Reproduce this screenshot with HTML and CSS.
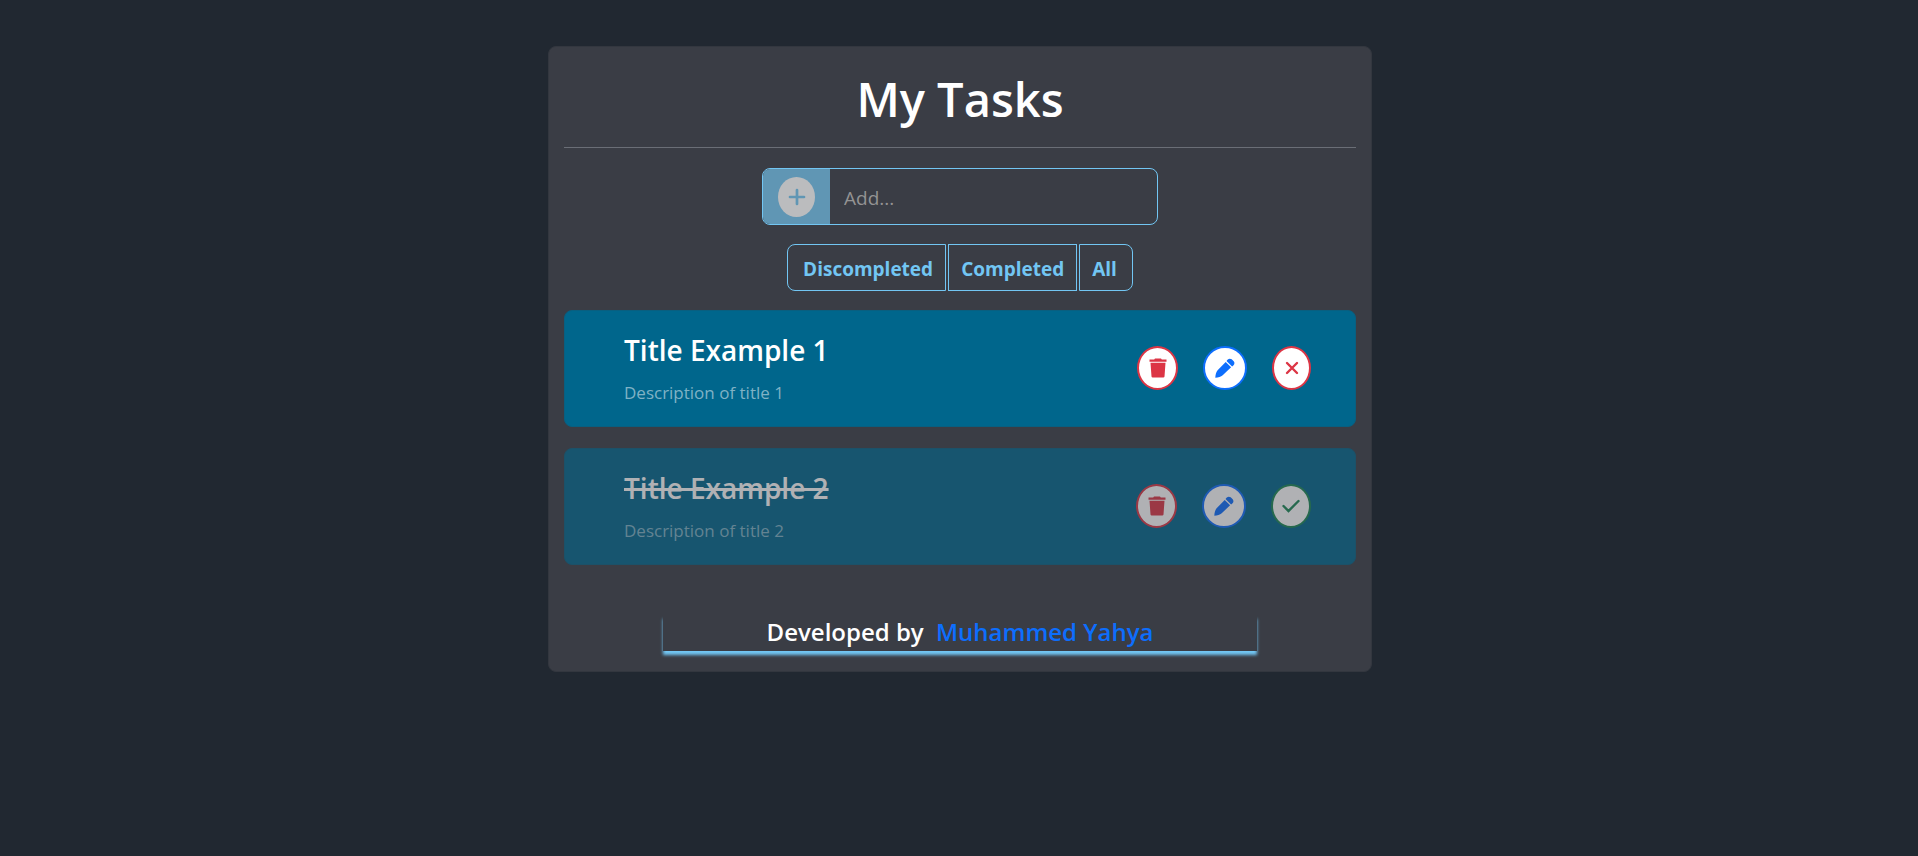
FILE: index.html
```html
<!DOCTYPE html>
<html lang="en">
<head>
<meta charset="utf-8">
<meta name="viewport" content="width=device-width, initial-scale=1">
<title>My Tasks</title>
<link rel="stylesheet" href="styles.css">
</head>
<body>
<svg class="sprite" aria-hidden="true">
  <symbol id="trash" viewBox="0 0 18 20"><path fill="currentColor" d="M5.200 1.500L6 .5h6l.8 1H17.500v2.200H.5V1.500zM1.500 4.700h15l-1 13.800a1.200 1.200 0 0 1-1.200 1H3.700a1.200 1.200 0 0 1-1.200-1z"/></symbol>
  <symbol id="pencil" viewBox="0 0 20 20"><path fill="currentColor" d="M12.500 1.800c1.300-1.400 2.900-1.500 4.200-.5l2 2c1.100 1.300 1 2.900-.4 4.200l-1.200 1-5.600-5.600zM10.700 3.900l5.400 5.400-8.400 8c-1.800 1.500-4.300 2.200-7.400 2.500.2-3 .8-5.700 2.300-7.500z"/></symbol>
  <symbol id="cross" viewBox="0 0 14 14"><path d="M2 2l10 10M12 2L2 12" fill="none" stroke="currentColor" stroke-width="2.400" stroke-linecap="round"/></symbol>
  <symbol id="check" viewBox="0 0 18 14"><path d="M1.500 7l5 5L16.500 2" fill="none" stroke="currentColor" stroke-width="2.400" stroke-linecap="round"/></symbol>
  <symbol id="plus" viewBox="0 0 18 18"><path d="M9 2v14M2 9h14" fill="none" stroke="currentColor" stroke-width="2.700" stroke-linecap="round"/></symbol>
</svg>
<main class="card">
  <h1 class="title">My Tasks</h1>
  <hr class="divider">
  <form class="add">
    <button class="add-button" type="button" aria-label="Add task"><span class="add-circle"><svg class="icon-plus"><use href="#plus"/></svg></span></button>
    <input class="add-input" type="text" placeholder="Add..." aria-label="New task">
  </form>
  <div class="filters">
    <button class="filter" type="button">Discompleted</button>
    <button class="filter" type="button">Completed</button>
    <button class="filter" type="button">All</button>
  </div>
  <ul class="tasks">
    <li class="task">
      <div class="task-text">
        <h2 class="task-title">Title Example 1</h2>
        <p class="task-desc">Description of title 1</p>
      </div>
      <div class="actions">
        <button class="action remove" type="button" aria-label="Delete"><svg class="icon-trash"><use href="#trash"/></svg></button>
        <button class="action edit" type="button" aria-label="Edit"><svg class="icon-pencil"><use href="#pencil"/></svg></button>
        <button class="action pending" type="button" aria-label="Not completed"><svg class="icon-cross"><use href="#cross"/></svg></button>
      </div>
    </li>
    <li class="task done">
      <div class="task-text">
        <h2 class="task-title">Title Example 2</h2>
        <p class="task-desc">Description of title 2</p>
      </div>
      <div class="actions">
        <button class="action remove" type="button" aria-label="Delete"><svg class="icon-trash"><use href="#trash"/></svg></button>
        <button class="action edit" type="button" aria-label="Edit"><svg class="icon-pencil"><use href="#pencil"/></svg></button>
        <button class="action complete" type="button" aria-label="Completed"><svg class="icon-check"><use href="#check"/></svg></button>
      </div>
    </li>
  </ul>
  <footer class="footer">Developed by <a class="author" href="#">Muhammed Yahya</a></footer>
</main>
</body>
</html>
```
FILE: styles.css
```css
* {
  box-sizing: border-box;
}

body {
  margin: 0;
  padding: 46px 12px 46px 14px;
  background: #212831;
  color: #fff;
  font-family: "Segoe UI", "Open Sans", "Noto Sans", sans-serif;
}

button {
  font: inherit;
  cursor: pointer;
}

.sprite {
  position: absolute;
  width: 0;
  height: 0;
}

.card {
  display: flex;
  flex-direction: column;
  align-items: center;
  max-width: 824px;
  margin: 0 auto;
  padding: 16px 15px 20px;
  background: #3a3d45;
  border: 1px solid #33373f;
  border-radius: 8px;
}

.title {
  margin: 6px 0 18px;
  font-size: 47px;
  font-weight: 600;
  line-height: 60px;
}

.divider {
  width: 100%;
  height: 1px;
  margin: 0 0 20px;
  border: 0;
  background: #6a6e76;
}

.add {
  display: flex;
  width: 50%;
  height: 57px;
  margin-bottom: 19px;
  border: 1px solid #72c6f3;
  border-radius: 8px;
  overflow: hidden;
}

.add-button {
  display: flex;
  align-items: center;
  justify-content: center;
  flex: 0 0 67px;
  padding: 0;
  border: 0;
  background: #6096b4;
}

.add-circle {
  display: flex;
  align-items: center;
  justify-content: center;
  width: 37px;
  height: 40px;
  border-radius: 50%;
  background: #bbbcbe;
  color: #6096b4;
}

.icon-plus {
  width: 18px;
  height: 18px;
}

.add-input {
  flex: 1;
  min-width: 0;
  padding: 2px 14px 0;
  border: 0;
  outline: 0;
  background: transparent;
  color: #fff;
  font: inherit;
  font-size: 19px;
}

.add-input::placeholder {
  color: #939393;
  opacity: 1;
}

.filters {
  display: flex;
  gap: 2px;
  margin-bottom: 19px;
}

.filter {
  height: 47px;
  padding: 2px 12px 0;
  border: 1px solid #72c6f3;
  background: transparent;
  color: #72c6f3;
  font-size: 19px;
  font-weight: 700;
}

.filter:first-child {
  padding-left: 15px;
  border-radius: 8px 0 0 8px;
}

.filter:last-child {
  padding-right: 15px;
  border-radius: 0 8px 8px 0;
}

.tasks {
  display: grid;
  gap: 21px;
  width: 100%;
  margin: 0 0 50px;
  padding: 0;
  list-style: none;
}

.task {
  display: flex;
  align-items: center;
  justify-content: space-between;
  padding: 18px 44px 19px 59px;
  background: #00668c;
  border: 1px solid #095f80;
  border-radius: 8px;
}

.done {
  opacity: 0.6;
}

.task-title {
  margin: 0 0 8px;
  font-size: 28px;
  font-weight: 600;
  line-height: 42px;
}

.done .task-title {
  text-decoration: line-through;
  text-decoration-thickness: 3px;
}

.task-desc {
  margin: 0;
  color: #7fb2c5;
  font-size: 17px;
  line-height: 28px;
}

.actions {
  display: flex;
  gap: 25px;
}

.action {
  display: flex;
  align-items: center;
  justify-content: center;
  width: 41px;
  height: 44px;
  padding: 0;
  border: 2px solid currentColor;
  border-radius: 50%;
  background: #fff;
}

.remove,
.pending {
  color: #dc3545;
}

.pending {
  width: 39px;
}

.edit {
  width: 44px;
  color: #0d6efd;
}

.complete {
  width: 40px;
  color: #198754;
}

.icon-trash {
  width: 18px;
  height: 20px;
}

.icon-pencil {
  width: 20px;
  height: 20px;
}

.icon-cross {
  width: 14px;
  height: 14px;
}

.icon-check {
  width: 18px;
  height: 14px;
}

.footer {
  width: 75%;
  padding-bottom: 3px;
  font-size: 24px;
  font-weight: 600;
  line-height: 33px;
  text-align: center;
  box-shadow: 0 4px 3px #72c6f3;
}

.author {
  margin-left: 6px;
  color: #0d6efd;
  text-decoration: none;
}
```
